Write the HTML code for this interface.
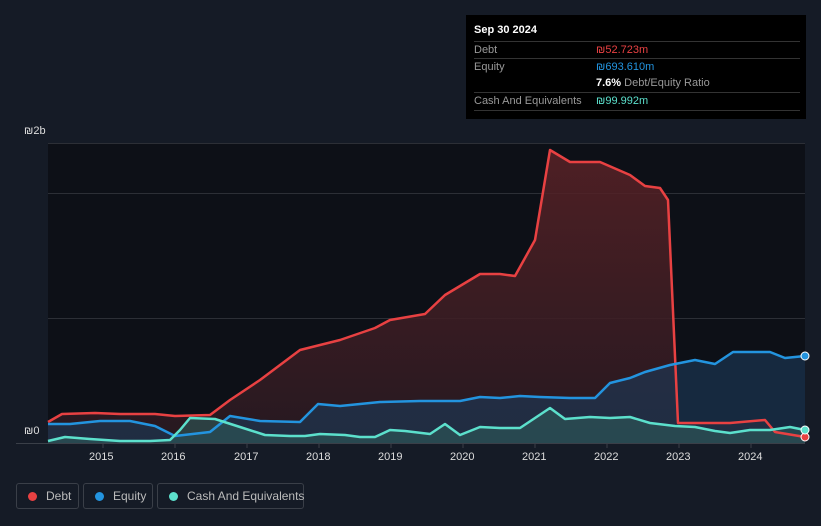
<!DOCTYPE html><html><head><style>
body{margin:0;background:#151b26;width:821px;height:526px;overflow:hidden;font-family:"Liberation Sans",sans-serif;position:relative}
.tt{position:absolute;left:466px;top:15px;width:340px;height:104px;background:#000;color:#fff;font-size:11px}
.r{position:absolute;left:8px;right:6px;border-top:1px solid #333;height:17px;line-height:17px}
.l{color:#999;position:absolute;left:0}.v{position:absolute;left:122px}
.leg{position:absolute;top:483px;height:26px;border:1px solid #3a3f48;border-radius:3px;color:#bbb;font-size:12px;line-height:24px;box-sizing:border-box;white-space:nowrap}
.leg i{display:inline-block;width:9px;height:9px;border-radius:50%;margin:0 9px 0 11px;vertical-align:-1px}
.ax{position:absolute;color:#ddd;font-size:11px}
</style></head><body>
<svg width="821" height="526" style="position:absolute;left:0;top:0">
<rect x="48" y="143" width="757" height="300" fill="#0d1017"/>
<g stroke="#2c2f36" stroke-width="1"><line x1="48" y1="143.5" x2="805" y2="143.5"/><line x1="48" y1="193.5" x2="805" y2="193.5"/><line x1="48" y1="318.5" x2="805" y2="318.5"/></g>
<defs><linearGradient id="gd" x1="0" y1="0" x2="0" y2="1"><stop offset="0" stop-color="#5a2226"/><stop offset="1" stop-color="#2a1a22"/></linearGradient></defs>
<path d="M48,422 L62,414 L95,413 L120,414 L155,414 L175,416 L210,415 L230,400 L260,380 L300,350 L340,340 L375,328 L390,320 L425,314 L445,295 L480,274 L500,274 L515,276 L535,240 L550,150 L570,162 L600,162 L630,175 L645,186 L660,188 L668,200 L678,423 L700,423 L730,423 L765,420 L775,432 L805,437 L805,443 L48,443Z" fill="url(#gd)" opacity="0.85"/>
<path d="M48,424 L70,424 L100,421 L130,421 L155,426 L175,436 L210,432 L230,416 L260,421 L300,422 L318,404 L340,406 L380,402 L420,401 L460,401 L480,397 L500,398 L520,396 L540,397 L570,398 L595,398 L610,383 L630,378 L645,372 L670,365 L695,360 L715,364 L733,352 L770,352 L785,358 L805,356 L805,443 L48,443Z" fill="#1d3a5a" opacity="0.6"/>
<path d="M48,441 L65,437 L90,439 L120,441 L150,441 L170,440 L180,430 L190,418 L215,419 L240,427 L265,435 L290,436 L305,436 L320,434 L345,435 L360,437 L375,437 L390,430 L405,431 L430,434 L445,424 L460,435 L480,427 L500,428 L520,428 L535,418 L550,408 L565,419 L590,417 L610,418 L630,417 L650,423 L675,426 L695,427 L715,431 L730,433 L750,430 L770,430 L790,427 L805,430 L805,443 L48,443Z" fill="#2f5a5a" opacity="0.6"/>
<g fill="none" stroke-width="2.5" stroke-linejoin="round">
<path d="M48,422 L62,414 L95,413 L120,414 L155,414 L175,416 L210,415 L230,400 L260,380 L300,350 L340,340 L375,328 L390,320 L425,314 L445,295 L480,274 L500,274 L515,276 L535,240 L550,150 L570,162 L600,162 L630,175 L645,186 L660,188 L668,200 L678,423 L700,423 L730,423 L765,420 L775,432 L805,437" stroke="#e84142"/>
<path d="M48,424 L70,424 L100,421 L130,421 L155,426 L175,436 L210,432 L230,416 L260,421 L300,422 L318,404 L340,406 L380,402 L420,401 L460,401 L480,397 L500,398 L520,396 L540,397 L570,398 L595,398 L610,383 L630,378 L645,372 L670,365 L695,360 L715,364 L733,352 L770,352 L785,358 L805,356" stroke="#2394df"/>
<path d="M48,441 L65,437 L90,439 L120,441 L150,441 L170,440 L180,430 L190,418 L215,419 L240,427 L265,435 L290,436 L305,436 L320,434 L345,435 L360,437 L375,437 L390,430 L405,431 L430,434 L445,424 L460,435 L480,427 L500,428 L520,428 L535,418 L550,408 L565,419 L590,417 L610,418 L630,417 L650,423 L675,426 L695,427 L715,431 L730,433 L750,430 L770,430 L790,427 L805,430" stroke="#5ce0cc"/>
</g>
<circle cx="805" cy="437" r="4" fill="#e84142" stroke="#fff"/><circle cx="805" cy="356" r="4" fill="#2394df" stroke="#fff"/><circle cx="805" cy="430" r="4" fill="#5ce0cc" stroke="#fff"/>
<line x1="16" y1="443.5" x2="805" y2="443.5" stroke="#3a3f48"/>
<g stroke="#3a3f48"><line x1="103" y1="443" x2="103" y2="448"/><line x1="175" y1="443" x2="175" y2="448"/><line x1="247" y1="443" x2="247" y2="448"/><line x1="319" y1="443" x2="319" y2="448"/><line x1="391" y1="443" x2="391" y2="448"/><line x1="463" y1="443" x2="463" y2="448"/><line x1="535" y1="443" x2="535" y2="448"/><line x1="607" y1="443" x2="607" y2="448"/><line x1="679" y1="443" x2="679" y2="448"/><line x1="751" y1="443" x2="751" y2="448"/></g>
</svg>
<div class="ax" style="left:24px;top:125px">₪2b</div>
<div class="ax" style="left:24px;top:425px">₪0</div>
<div class="ax" style="left:89px;top:451px">2015</div><div class="ax" style="left:161px;top:451px">2016</div><div class="ax" style="left:234px;top:451px">2017</div><div class="ax" style="left:306px;top:451px">2018</div><div class="ax" style="left:378px;top:451px">2019</div><div class="ax" style="left:450px;top:451px">2020</div><div class="ax" style="left:522px;top:451px">2021</div><div class="ax" style="left:594px;top:451px">2022</div><div class="ax" style="left:666px;top:451px">2023</div><div class="ax" style="left:738px;top:451px">2024</div>
<div class="tt">
<div style="position:absolute;left:8px;top:9px;font-weight:bold;font-size:11px">Sep 30 2024</div>
<div class="r" style="top:26px"><span class="l">Debt</span><span class="v" style="color:#e84142">₪52.723m</span></div>
<div class="r" style="top:43px"><span class="l">Equity</span><span class="v" style="color:#2394df">₪693.610m</span></div>
<div class="r" style="top:60px;border:0"><span class="v"><b>7.6%</b> <span style="color:#999">Debt/Equity Ratio</span></span></div>
<div class="r" style="top:77px"><span class="l">Cash And Equivalents</span><span class="v" style="color:#5ce0cc">₪99.992m</span></div>
<div class="r" style="top:95px;height:0"></div>
</div>
<div class="leg" style="left:16px;width:63px"><i style="background:#e84142"></i>Debt</div>
<div class="leg" style="left:83px;width:70px"><i style="background:#2394df"></i>Equity</div>
<div class="leg" style="left:157px;width:147px"><i style="background:#5ce0cc"></i>Cash And Equivalents</div>
</body></html>
